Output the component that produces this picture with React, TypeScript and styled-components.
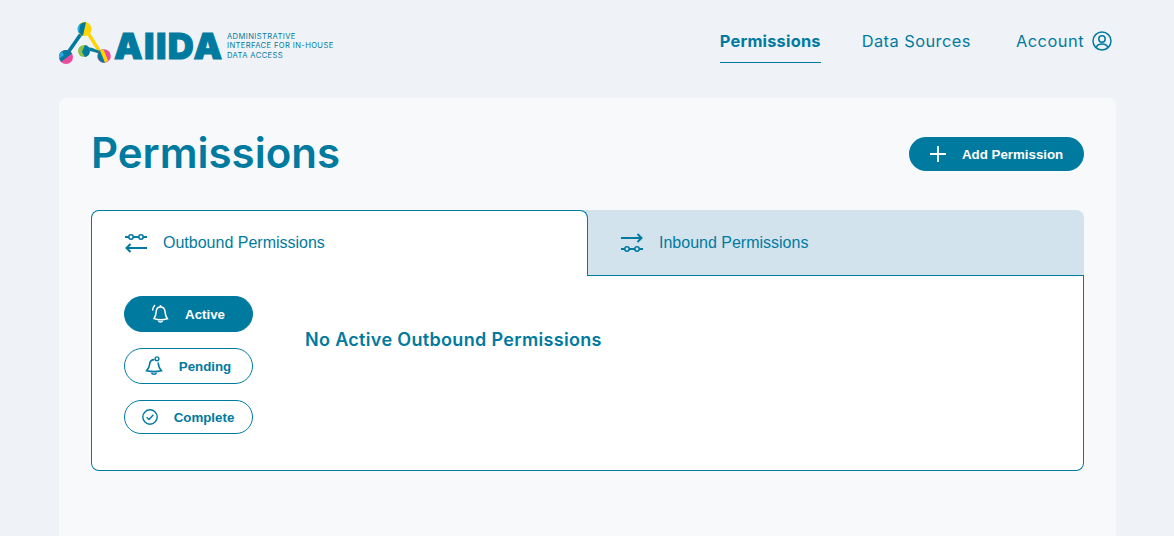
import React from 'react'
import styled, { createGlobalStyle } from 'styled-components'

const teal = '#017aa0'
const display = '"Inter", "Open Sans", sans-serif'
const plain = '"Liberation Sans", Arial, sans-serif'

const GlobalStyle = createGlobalStyle`
    html, body {
        margin: 0;
        height: 536px;
        overflow: hidden;
        background-color: #eff3f8;
    }
`

const Page = styled.div`
    height: 536px;
    padding: 0 58px 0 59px;
    color: ${teal};
    overflow: hidden;
`

const Header = styled.header`
    display: flex;
    justify-content: space-between;
    height: 98px;
`

const Logo = styled.div`
    display: flex;
    align-items: flex-start;
    padding-top: 22px;
`

const LogoWord = styled.span`
    font-family: ${display};
    font-weight: 900;
    font-size: 36px;
    line-height: 30px;
    letter-spacing: 1.4px;
    -webkit-text-stroke: 1px ${teal};
    margin: 9px 0 0 3px;
    width: 113px;
    white-space: nowrap;
`

const LogoTagline = styled.span`
    font-family: ${display};
    font-weight: 400;
    font-size: 7.6px;
    line-height: 9.4px;
    letter-spacing: 0.38px;
    margin: 10px 0 0 0;
    white-space: nowrap;
`

const Nav = styled.nav`
    display: flex;
    align-items: flex-start;
    padding: 28px 4px 0 0;
`

const NavLink = styled.a<{ $active?: boolean; $gapLeft?: number; $spacing: number }>`
    display: flex;
    align-items: center;
    gap: 8px;
    height: 26px;
    padding-bottom: 8px;
    font-family: ${display};
    font-size: 16.4px;
    letter-spacing: ${(p) => p.$spacing}px;
    font-weight: ${(p) => (p.$active ? 700 : 400)};
    border-bottom: 1px solid ${(p) => (p.$active ? teal : 'transparent')};
    margin-left: ${(p) => p.$gapLeft ?? 0}px;
    white-space: nowrap;
`

const Card = styled.main`
    height: 438px;
    padding: 0 32px;
    background-color: #f7f9fb;
    border-radius: 8px 8px 0 0;
`

const TitleRow = styled.div`
    display: flex;
    align-items: center;
    justify-content: space-between;
    height: 112px;
`

const Title = styled.h1`
    margin: -4px 0 0;
    font-family: ${display};
    font-size: 42px;
    font-weight: 600;
`

const AddButton = styled.button`
    display: flex;
    align-items: center;
    width: 175px;
    height: 34px;
    padding: 0 0 0 21px;
    gap: 16px;
    border: none;
    border-radius: 17px;
    background-color: ${teal};
    color: #fff;
    font-family: ${plain};
    font-size: 13.3px;
    font-weight: 700;
`

const Tabs = styled.div`
    display: grid;
    grid-template-columns: 497px 496px;
`

const ActiveTab = styled.div`
    display: flex;
    align-items: center;
    position: relative;
    z-index: 1;
    box-sizing: border-box;
    height: 66px;
    gap: 16px;
    padding: 0 0 1px 33px;
    font-family: ${plain};
    font-size: 16px;
    background-color: #fff;
    border: 1px solid ${teal};
    border-bottom: none;
    border-radius: 8px 8px 0 0;
`

const InactiveTab = styled.div`
    display: flex;
    align-items: center;
    box-sizing: border-box;
    height: 66px;
    gap: 16px;
    margin-left: -8px;
    padding-left: 41px;
    font-family: ${plain};
    font-size: 16px;
    background-color: #d2e3ed;
    border-bottom: 1px solid ${teal};
    border-radius: 0 8px 0 0;
`

const Panel = styled.section`
    display: flex;
    box-sizing: border-box;
    height: 195px;
    padding: 20px 32px;
    background-color: #fff;
    border: 1px solid ${teal};
    border-top: none;
    border-radius: 0 0 8px 8px;
`

const StatusList = styled.div`
    display: flex;
    flex-direction: column;
    gap: 16px;
    width: 129px;
`

const StatusButton = styled.button<{ $active?: boolean; $short?: boolean }>`
    display: flex;
    align-items: center;
    justify-content: center;
    gap: 16px;
    box-sizing: border-box;
    width: 129px;
    height: ${(p) => (p.$short ? 34 : 36)}px;
    padding: 0 1px 0 0;
    border: 1px solid ${teal};
    border-radius: 18px;
    background-color: ${(p) => (p.$active ? teal : '#fff')};
    color: ${(p) => (p.$active ? '#fff' : teal)};
    font-family: ${plain};
    font-size: 13.3px;
    font-weight: 700;
`

const EmptyMessage = styled.h2`
    margin: 32px 0 0 52px;
    font-family: ${display};
    font-size: 18px;
    letter-spacing: 0.33px;
    line-height: 24px;
    font-weight: 600;
`

const LogoMark = () => (
    <svg width="52" height="44" viewBox="0 0 52 44">
        <path d="M24 9 L8 32" stroke={teal} strokeWidth="3.6" fill="none" />
        <path d="M27 8 L43 33" stroke="#ffd400" strokeWidth="3.4" fill="none" />
        <path d="M25 28 C31 25 35 29 43 31" stroke={teal} strokeWidth="3" fill="none" />
        <circle cx="25.5" cy="7" r="7" fill="#ffd400" />
        <path d="M27 0.2 A7 7 0 0 0 24 13.8 Z" fill={teal} />
        <path d="M21.5 1.6 A7 7 0 0 0 20 11.5 Z" fill="#29a9e0" />
        <circle cx="7" cy="35" r="7" fill="#ea4c9b" />
        <path d="M0 35 A7 7 0 0 1 13 31.5 L2 40 Z" fill={teal} />
        <path d="M0.2 36.8 A7 7 0 0 1 3 29.4 L5 33 Z" fill="#29a9e0" />
        <circle cx="25" cy="29" r="6" fill="#8dc24a" />
        <path d="M26 23.1 A6 6 0 0 1 26 34.9 L23 30 Z" fill={teal} />
        <circle cx="45" cy="34" r="6.8" fill="#ea4c9b" />
        <path d="M44 27.3 A6.8 6.8 0 0 0 46 40.7 Z" fill={teal} />
        <path d="M41 28.5 L44.5 27.2 L49 38.5 L46 40.7 Z" fill="#ffd400" />
    </svg>
)

const UserIcon = () => (
    <svg width="20" height="20" viewBox="0 0 20 20" fill="none" stroke={teal} strokeWidth="1.5">
        <circle cx="10" cy="10" r="9" />
        <circle cx="10" cy="8" r="3.2" />
        <path d="M4.2 16.5 C5 13.8 7.5 13 10 13 C12.5 13 15 13.8 15.8 16.5" />
    </svg>
)

const PlusIcon = () => (
    <svg width="16" height="16" viewBox="0 0 16 16" stroke="#fff" strokeWidth="1.8">
        <path d="M8 0 V16 M0 8 H16" />
    </svg>
)

const OutboundIcon = () => (
    <svg width="22" height="20" viewBox="0 0 22 20" fill="none" stroke={teal} strokeWidth="2">
        <path d="M0 4 H3.5 M8.5 4 H13.5 M18.5 4 H22" />
        <circle cx="6" cy="4" r="2.2" strokeWidth="1.6" />
        <circle cx="16" cy="4" r="2.2" strokeWidth="1.6" />
        <path d="M1.5 15 H22 M5.5 11 L1.5 15 L5.5 19" />
    </svg>
)

const InboundIcon = () => (
    <svg width="22" height="20" viewBox="0 0 22 20" fill="none" stroke={teal} strokeWidth="2">
        <path d="M0 5 H20.5 M16.5 1 L20.5 5 L16.5 9" />
        <path d="M0 16 H3.5 M8.5 16 H13.5 M18.5 16 H22" />
        <circle cx="6" cy="16" r="2.2" strokeWidth="1.6" />
        <circle cx="16" cy="16" r="2.2" strokeWidth="1.6" />
    </svg>
)

const BellRingIcon = () => (
    <svg width="18" height="20" viewBox="0 0 18 20" fill="none" stroke="#fff" strokeWidth="1.5">
        <path d="M9.5 3 C7 3 5.4 5 5.2 7.6 C5 10.6 4.4 12.4 3 14.6 C7 16 12 16 16.4 14.8 C14.8 12.6 14.2 10.6 14 7.6 C13.8 5 12 3 9.5 3 Z" />
        <path d="M7.4 16.6 C8 18.6 11 18.6 11.6 16.6" />
        <path d="M4 1 C2.4 2.6 1.6 4.4 1.6 6.4 M9.5 1 V3" />
    </svg>
)

const BellPendingIcon = () => (
    <svg width="18" height="20" viewBox="0 0 18 20" fill="none" stroke={teal} strokeWidth="1.6">
        <path d="M9.4 3.6 C6.4 3.6 4.8 5.6 4.6 8.4 C4.4 11.2 3.4 12.8 1.6 14.8 C6 15.8 12 15.8 16.4 14.8 C14.6 12.8 13.6 11.2 13.4 8.4 C13.4 7.8 13.3 7.2 13.1 6.6" />
        <path d="M6.6 16.8 C7.2 18.8 10.8 18.8 11.4 16.8" />
        <circle cx="12" cy="2.8" r="1.9" strokeWidth="1.4" />
    </svg>
)

const CheckCircleIcon = () => (
    <svg width="16" height="16" viewBox="0 0 16 16" fill="none" stroke={teal} strokeWidth="1.4">
        <circle cx="8" cy="8" r="7.2" />
        <path d="M4.6 8.2 L7 10.4 L11.4 5.8" />
    </svg>
)

const App = (): JSX.Element => {
    return (
        <Page>
            <GlobalStyle />
            <Header>
                <Logo>
                    <LogoMark />
                    <LogoWord>AIIDA</LogoWord>
                    <LogoTagline>
                        ADMINISTRATIVE
                        <br />
                        INTERFACE FOR IN-HOUSE
                        <br />
                        DATA ACCESS
                    </LogoTagline>
                </Logo>
                <Nav>
                    <NavLink $active $spacing={0.2}>Permissions</NavLink>
                    <NavLink $gapLeft={41} $spacing={0.45}>Data Sources</NavLink>
                    <NavLink $gapLeft={45} $spacing={0.5}>
                        Account
                        <UserIcon />
                    </NavLink>
                </Nav>
            </Header>
            <Card>
                <TitleRow>
                    <Title>Permissions</Title>
                    <AddButton>
                        <PlusIcon />
                        Add Permission
                    </AddButton>
                </TitleRow>
                <Tabs>
                    <ActiveTab>
                        <OutboundIcon />
                        Outbound Permissions
                    </ActiveTab>
                    <InactiveTab>
                        <InboundIcon />
                        Inbound Permissions
                    </InactiveTab>
                </Tabs>
                <Panel>
                    <StatusList>
                        <StatusButton $active>
                            <BellRingIcon />
                            Active
                        </StatusButton>
                        <StatusButton>
                            <BellPendingIcon />
                            Pending
                        </StatusButton>
                        <StatusButton $short>
                            <CheckCircleIcon />
                            Complete
                        </StatusButton>
                    </StatusList>
                    <EmptyMessage>No Active Outbound Permissions</EmptyMessage>
                </Panel>
            </Card>
        </Page>
    )
}

export default App
